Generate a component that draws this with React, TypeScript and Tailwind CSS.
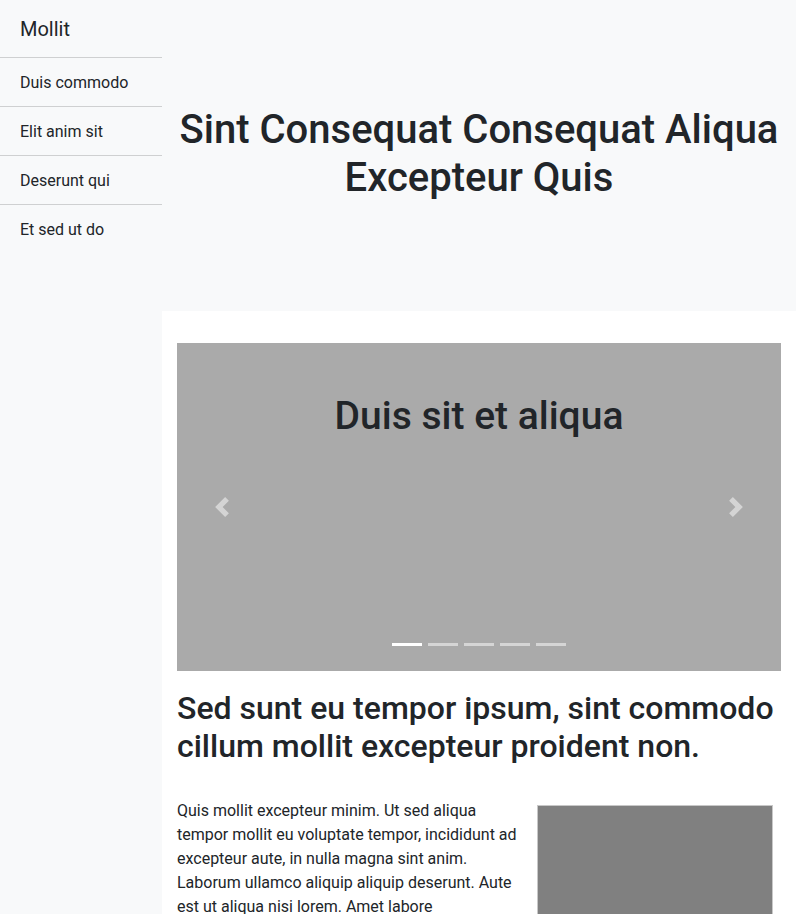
import React from "react";

const navItems = ["Duis commodo", "Elit anim sit", "Deserunt qui", "Et sed ut do"];

function Chevron({ flip }: { flip?: boolean }) {
  return (
    <svg
      viewBox="0 0 8 8"
      className={flip ? "h-5 w-5 rotate-180" : "h-5 w-5"}
      fill="#fff"
    >
      <path d="M5.25 0l-4 4 4 4 1.5-1.5L4.25 4l2.5-2.5L5.25 0z" />
    </svg>
  );
}

export default function App() {
  return (
    <div className="flex min-h-[914px] font-['Roboto','Liberation_Sans',sans-serif] text-[#212529]">
      {/* sidebar */}
      <aside className="w-[162px] shrink-0 bg-[#f8f9fa]">
        <div className="flex h-[57px] items-center px-5 text-xl">Mollit</div>
        {navItems.map((item) => (
          <div
            key={item}
            className="flex h-[49px] items-center border-t border-[#cfd0d1] px-5 pt-px text-base"
          >
            {item}
          </div>
        ))}
      </aside>

      <div className="flex-1 min-w-0">
        <header className="flex h-[311px] items-center justify-center bg-[#f8f9fa] px-4 pb-1">
          <h1 className="text-center text-[40px] leading-[48px] font-medium">
            Sint Consequat Consequat Aliqua Excepteur Quis
          </h1>
        </header>

        <main className="bg-white px-[15px] pt-8">
          {/* carousel */}
          <div className="relative h-[328px] bg-[#aaaaaa]">
            <h2 className="pt-[49px] text-center text-[39px] leading-[48px] font-medium">
              Duis sit et aliqua
            </h2>
            <button className="absolute left-0 top-0 flex h-full w-[15%] items-center justify-center opacity-50">
              <Chevron />
            </button>
            <button className="absolute right-0 top-0 flex h-full w-[15%] items-center justify-center opacity-50">
              <Chevron flip />
            </button>
            <div className="absolute bottom-[25px] left-0 right-0 flex justify-center">
              {[0, 1, 2, 3, 4].map((i) => (
                <span
                  key={i}
                  className={
                    i === 0
                      ? "mx-[3px] h-[3px] w-[30px] bg-white"
                      : "mx-[3px] h-[3px] w-[30px] bg-white opacity-50"
                  }
                />
              ))}
            </div>
          </div>

          <h2 className="mt-[18px] text-[32px] leading-[38px] font-medium">
            Sed sunt eu tempor ipsum, sint commodo cillum mollit excepteur proident non.
          </h2>

          <div className="mt-[34px] flex items-start justify-between">
            <p className="w-[341px] text-base leading-6">
              Quis mollit excepteur minim. Ut sed aliqua tempor mollit eu voluptate tempor,
              incididunt ad excepteur aute, in nulla magna sint anim. Laborum ullamco aliquip
              aliquip deserunt. Aute est ut aliqua nisi lorem. Amet labore consectetur ad
              deserunt nisi mollit occaecat. Aliquip ut incididunt velit elit commodo.
            </p>
            <div className="mr-2 mt-1.5 h-[240px] w-[236px] shrink-0 border border-[#c8c8c8] bg-[#808080]" />
          </div>
        </main>
      </div>
    </div>
  );
}
